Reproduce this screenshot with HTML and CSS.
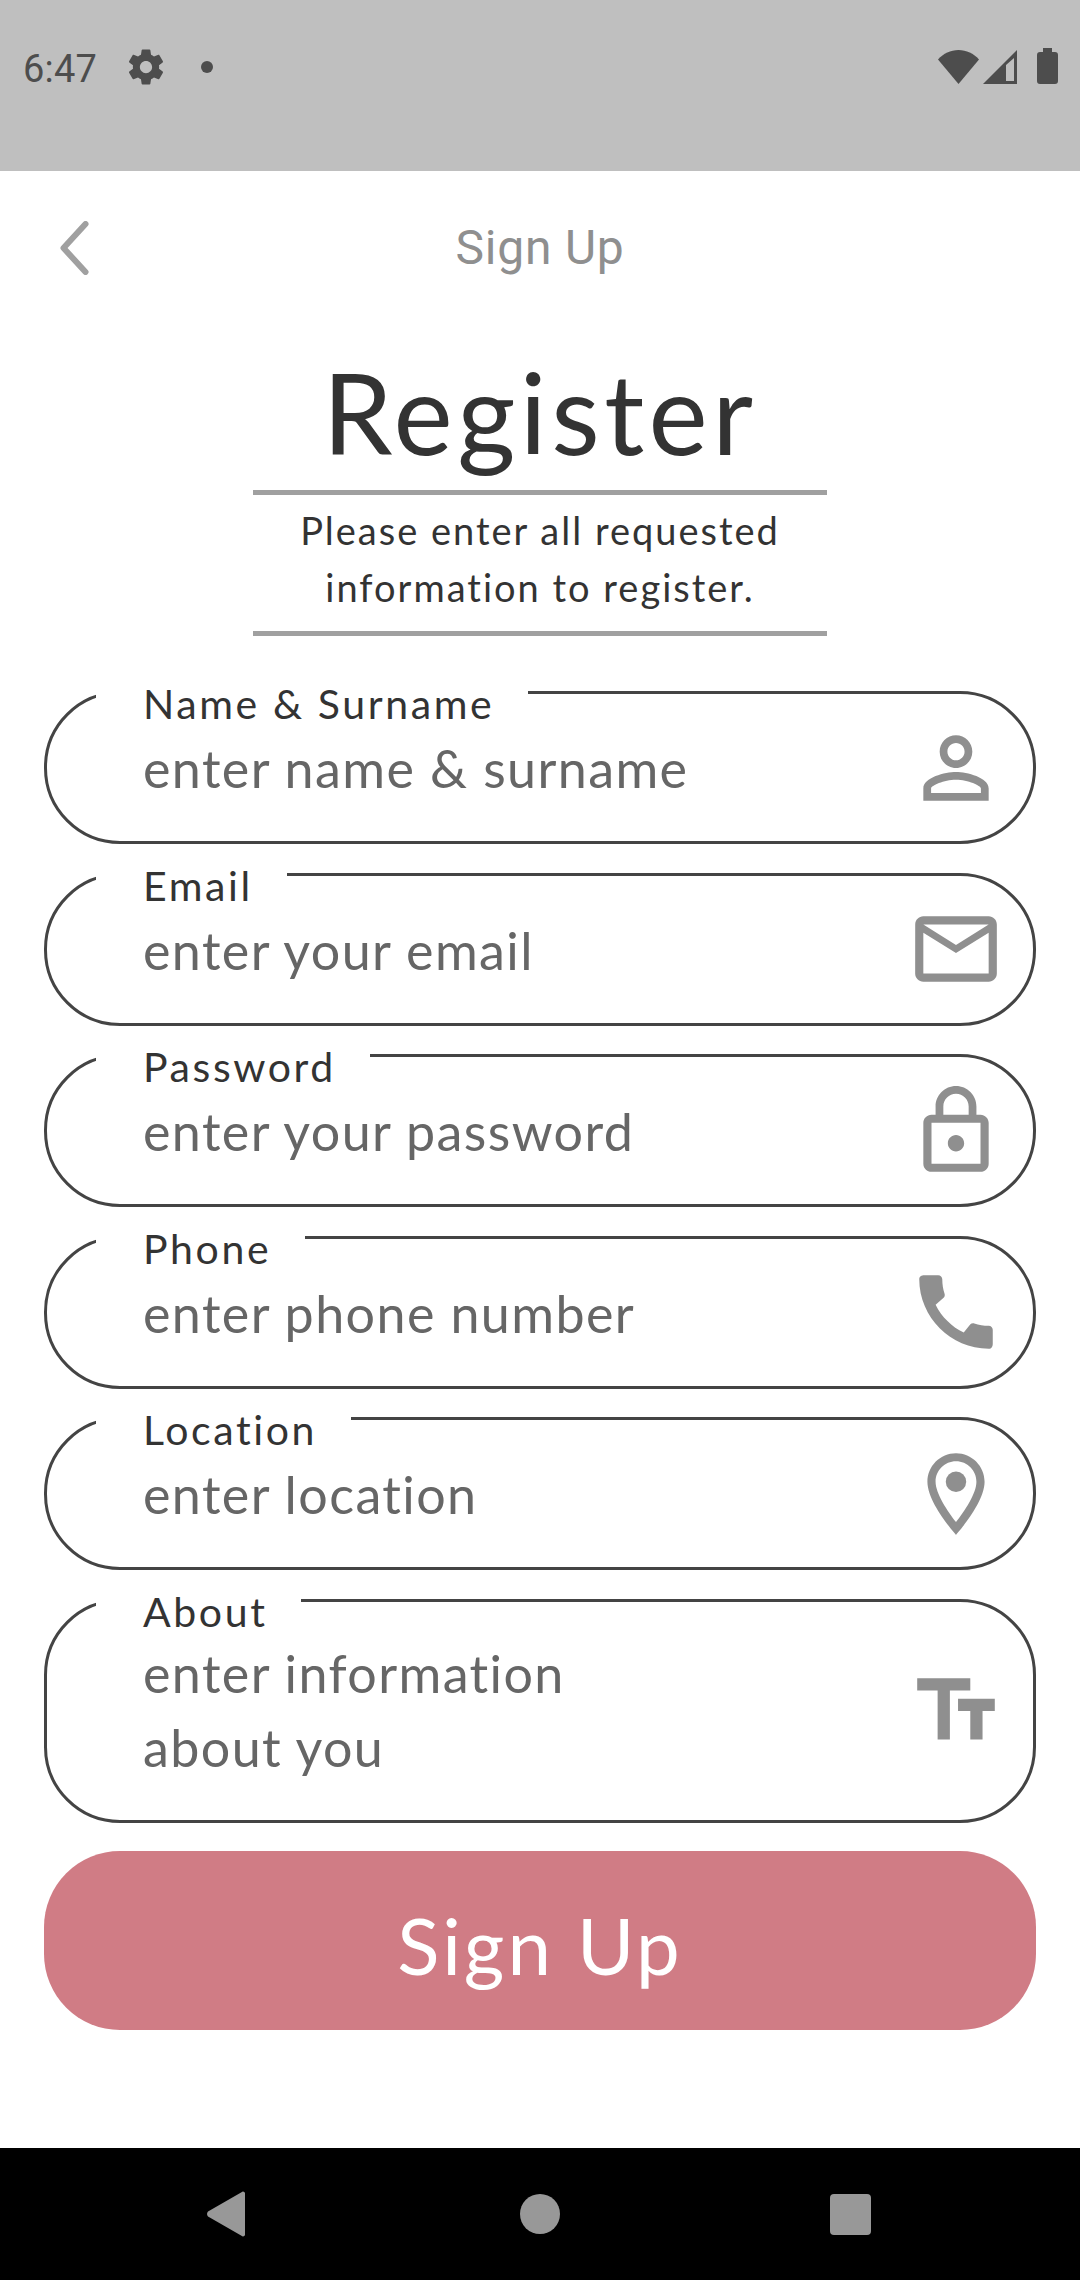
FILE: index.html
```html
<!DOCTYPE html>
<html lang="en">
<head>
<meta charset="utf-8">
<title>Sign Up</title>
<link rel="stylesheet" href="styles.css">
</head>
<body>
<div class="screen">
  <header class="status">
    <div class="status-left">
      <span class="time">6:47</span>
      <svg class="gear" viewBox="0 0 24 24"><path fill-rule="evenodd" d="M19.43 12.98c.04-.32.07-.64.07-.98s-.03-.66-.07-.98l2.11-1.65c.19-.15.24-.42.12-.64l-2-3.46c-.12-.22-.39-.3-.61-.22l-2.49 1c-.52-.4-1.08-.73-1.69-.98l-.38-2.65C14.46 2.18 14.25 2 14 2h-4c-.25 0-.46.18-.49.42l-.38 2.65c-.61.25-1.17.59-1.69.98l-2.49-1c-.23-.09-.49 0-.61.22l-2 3.46c-.13.22-.07.49.12.64l2.11 1.65c-.04.32-.07.65-.07.98s.03.66.07.98l-2.11 1.65c-.19.15-.24.42-.12.64l2 3.46c.12.22.39.3.61.22l2.49-1c.52.4 1.08.73 1.69.98l.38 2.65c.03.24.24.42.49.42h4c.25 0 .46-.18.49-.42l.38-2.65c.61-.25 1.17-.59 1.69-.98l2.49 1c.23.09.49 0 .61-.22l2-3.46c.12-.22.07-.49-.12-.64l-2.11-1.65zM12 15.5c-1.93 0-3.5-1.57-3.5-3.5s1.57-3.5 3.5-3.5 3.5 1.57 3.5 3.5-1.57 3.5-3.5 3.5z"/></svg>
      <span class="dot"></span>
    </div>
    <div class="status-right">
      <svg class="wifi" viewBox="0 0 41 34"><path d="M20.500 34 0 9.500C5.500 3.500 12.500 0 20.500 0s15 3.500 20.500 9.500z"/></svg>
      <svg class="signal" viewBox="0 0 34 34"><path fill-rule="evenodd" d="M34 0v34H0zM31 8 23 15v16h8z"/></svg>
      <svg class="battery" viewBox="0 0 21 36"><path d="M6 0h9v4h3a3 3 0 0 1 3 3v26a3 3 0 0 1-3 3H3a3 3 0 0 1-3-3V7a3 3 0 0 1 3-3h3z"/></svg>
    </div>
  </header>

  <nav class="topbar">
    <svg class="back" viewBox="0 0 32 54"><path d="M27 3 5 27l22 24"/></svg>
    <h2 class="topbar-title">Sign Up</h2>
  </nav>

  <main class="content">
    <section class="intro">
      <h1 class="heading">Register</h1>
      <p class="lead">Please enter all requested<br>information to register.</p>
    </section>

    <form class="form">
      <div class="field">
        <span class="field-label">Name &amp; Surname</span>
        <div class="field-value">enter name &amp; surname</div>
        <svg class="field-icon" viewBox="0 0 24 24"><path d="M12 5.900c1.160 0 2.100.94 2.100 2.100s-.94 2.100-2.100 2.100S9.900 9.160 9.900 8s.94-2.100 2.100-2.100m0 9c2.970 0 6.100 1.460 6.100 2.100v1.100H5.900V17c0-.64 3.130-2.100 6.100-2.100M12 4C9.790 4 8 5.790 8 8s1.790 4 4 4 4-1.790 4-4-1.790-4-4-4zm0 9c-2.670 0-8 1.340-8 4v3h16v-3c0-2.660-5.330-4-8-4z"/></svg>
      </div>
      <div class="field">
        <span class="field-label">Email</span>
        <div class="field-value">enter your email</div>
        <svg class="field-icon" viewBox="0 0 24 24"><path d="M20 4H4c-1.100 0-1.990.9-1.990 2L2 18c0 1.100.9 2 2 2h16c1.100 0 2-.9 2-2V6c0-1.100-.9-2-2-2zm0 14H4V8l8 5 8-5v10zm-8-7L4 6h16l-8 5z"/></svg>
      </div>
      <div class="field">
        <span class="field-label">Password</span>
        <div class="field-value">enter your password</div>
        <svg class="field-icon" viewBox="0 0 24 24"><path d="M12 17c1.100 0 2-.9 2-2s-.9-2-2-2-2 .9-2 2 .9 2 2 2zm6-9h-1V6c0-2.760-2.240-5-5-5S7 3.240 7 6v2H6c-1.100 0-2 .9-2 2v10c0 1.100.9 2 2 2h12c1.100 0 2-.9 2-2V10c0-1.100-.9-2-2-2zM8.900 6c0-1.710 1.390-3.100 3.100-3.100s3.100 1.390 3.100 3.100v2H8.900V6zM18 20H6V10h12v10z"/></svg>
      </div>
      <div class="field">
        <span class="field-label">Phone</span>
        <div class="field-value">enter phone number</div>
        <svg class="field-icon" viewBox="0 0 24 24"><path d="M20.010 15.380c-1.230 0-2.420-.2-3.530-.56-.35-.12-.74-.03-1.010.24l-1.570 1.970c-2.830-1.350-5.480-3.900-6.890-6.830l1.950-1.660c.27-.28.35-.67.24-1.020-.37-1.110-.56-2.300-.56-3.530 0-.54-.45-.99-.99-.99H4.190C3.650 3 3 3.240 3 3.990 3 13.280 10.730 21 20.010 21c.71 0 .99-.63.99-1.180v-3.450c0-.54-.45-.99-.99-.99z"/></svg>
      </div>
      <div class="field">
        <span class="field-label">Location</span>
        <div class="field-value">enter location</div>
        <svg class="field-icon" viewBox="0 0 24 24"><path d="M12 2C8.130 2 5 5.130 5 9c0 5.250 7 13 7 13s7-7.750 7-13c0-3.870-3.130-7-7-7zM7 9c0-2.760 2.240-5 5-5s5 2.240 5 5c0 2.880-2.880 7.190-5 9.880C9.920 16.210 7 11.850 7 9z"/><circle cx="12" cy="9" r="2.500"/></svg>
      </div>
      <div class="field field-tall">
        <span class="field-label">About</span>
        <div class="field-value">enter information<br>about you</div>
        <svg class="field-icon" viewBox="0 0 24 24"><path d="M2.500 4v3h5v12h3V7h5V4h-13zm19 5h-9v3h3v7h3v-7h3V9z"/></svg>
      </div>
      <button class="submit" type="button">Sign Up</button>
    </form>
  </main>

  <footer class="navbar">
    <svg class="nav-back" viewBox="0 0 38 46"><path d="M36 .5c1 0 2 .8 2 2v41c0 1.200-1 2-2 2-.6 0-1-.3-1.500-.8L1 25.500c-1.300-1.500-1.300-3.500 0-5L34.500 1.300c.5-.5.9-.8 1.500-.8z"/></svg>
    <span class="nav-home"></span>
    <span class="nav-recent"></span>
  </footer>
</div>
</body>
</html>
```
FILE: styles.css
```css
* { box-sizing: border-box; }
html, body { margin: 0; padding: 0; }
body { background: #fff; font-family: "Lato", "Noto Sans", sans-serif; }

.screen { width: 1080px; height: 2280px; display: flex; flex-direction: column; overflow: hidden; }

.status { height: 171px; flex: none; background: #bfbfbf; display: flex; justify-content: space-between; padding: 49px 22px 0 23px; color: #4d4d4d; }
.status-left { display: flex; align-items: flex-start; }
.status-right { display: flex; align-items: flex-start; padding-top: 1px; }
.time { font-family: Roboto, sans-serif; font-size: 38px; line-height: 36px; width: 102px; margin-top: 2px; letter-spacing: .2px; }
.gear { width: 42px; height: 42px; fill: #4d4d4d; margin-top: -3px; }
.dot { width: 12px; height: 12px; border-radius: 50%; background: #4d4d4d; margin: 12px 0 0 34px; }
.wifi { width: 41px; height: 34px; fill: #4d4d4d; margin-right: 4px; }
.signal { width: 34px; height: 34px; fill: #4d4d4d; margin-right: 20px; }
.battery { width: 21px; height: 36px; fill: #4d4d4d; margin-top: -2px; }

.topbar { height: 154px; flex: none; position: relative; display: flex; justify-content: center; }
.back { position: absolute; left: 58px; top: 50px; width: 33px; height: 54px; fill: none; stroke: #a0a0a0; stroke-width: 6; stroke-linecap: round; stroke-linejoin: round; }
.topbar-title { margin: 0; font-family: Roboto, sans-serif; font-weight: 400; font-size: 48px; line-height: 154px; height: 154px; color: #8f8f8f; letter-spacing: .8px; }

.content { flex: 1; display: flex; flex-direction: column; padding: 0 44px; }

.intro { width: 574px; align-self: center; text-align: center; }
.heading { margin: 52px 0 0; height: 69px; font-size: 112px; line-height: 69px; font-weight: 400; color: #333; letter-spacing: 4.500px; }
.lead { margin: 44px 0 0; padding: 7px 0 0; height: 146px; border-top: 5px solid #a0a0a0; border-bottom: 5px solid #a0a0a0; font-size: 38px; line-height: 57px; color: #333; letter-spacing: 2px; white-space: nowrap; }

.form { display: flex; flex-direction: column; gap: 28.500px; margin-top: 55px; }
.field { position: relative; height: 153px; border: 3px solid #444; border-radius: 76px; padding: 37px 160px 0 96px; }
.field-tall { height: 224px; padding-top: 34px; }
.field-label { position: absolute; left: 49px; top: -15px; padding: 0 34px 0 47px; background: #fff; font-size: 41px; line-height: 50px; color: #333; letter-spacing: 2.600px; white-space: nowrap; }
.field-value { font-size: 52px; line-height: 74px; color: #666; letter-spacing: 1.400px; white-space: nowrap; }
.field-icon { position: absolute; right: 28px; top: 50%; width: 98px; height: 98px; margin-top: -49px; fill: #8f8f8f; }

.submit { margin: 0; height: 179px; border: 0; border-radius: 76px; background: #d07c85; color: #fff; font-family: inherit; font-size: 78px; font-weight: 400; letter-spacing: 3px; padding: 8px 0 0; }

.navbar { height: 132px; flex: none; background: #000; display: flex; align-items: center; padding: 0 209px 0 207px; justify-content: space-between; }
.nav-back { width: 38px; height: 46px; fill: #989898; }
.nav-home { width: 40px; height: 40px; border-radius: 50%; background: #989898; margin-left: 5px; }
.nav-recent { width: 41px; height: 41px; border-radius: 4px; background: #989898; }
```
